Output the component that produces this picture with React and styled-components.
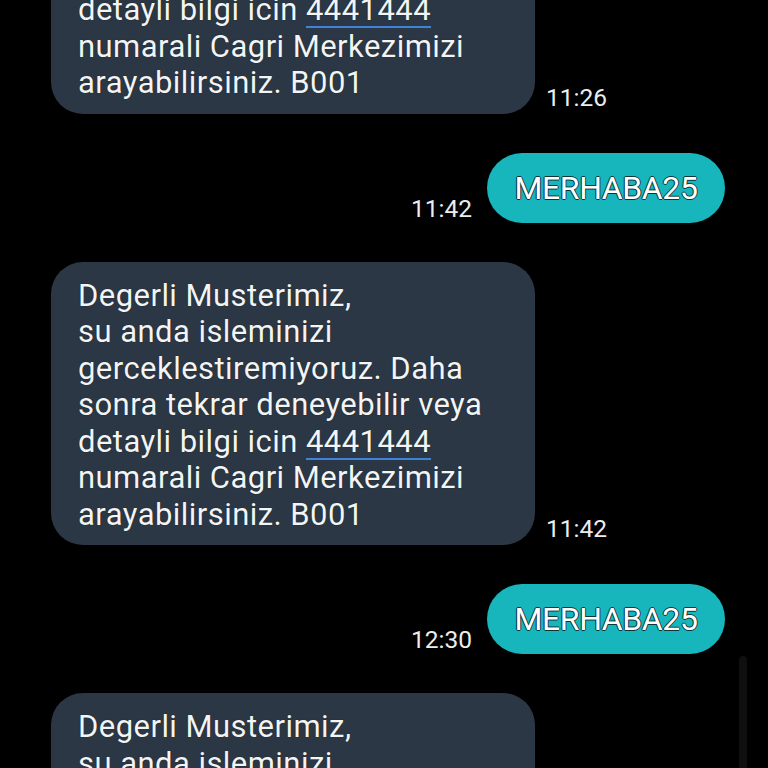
import React from "react";
import styled, { createGlobalStyle } from "styled-components";

const GlobalStyle = createGlobalStyle`
  html, body {
    margin: 0;
    padding: 0;
    background: #000;
  }
  body {
    font-family: Roboto, "Noto Sans", sans-serif;
  }
`;

const BODY_LINES = [
  "Degerli Musterimiz,",
  "su anda isleminizi",
  "gerceklestiremiyoruz. Daha",
  "sonra tekrar deneyebilir veya",
  ["detayli bilgi icin ", "4441444"],
  "numarali Cagri Merkezimizi",
  "arayabilirsiniz. B001",
];

const messages = [
  { id: 1, from: "them", time: "11:26" },
  { id: 2, from: "me", time: "11:42", text: "MERHABA25" },
  { id: 3, from: "them", time: "11:42" },
  { id: 4, from: "me", time: "12:30", text: "MERHABA25" },
  { id: 5, from: "them", time: "" },
];

const Screen = styled.div`
  position: relative;
  width: 768px;
  height: 768px;
  overflow: hidden;
  background: #000;
`;

const Thread = styled.div`
  display: flex;
  flex-direction: column;
  gap: 39px;
  margin-top: -170px;
`;

const Row = styled.div`
  display: flex;
  align-items: flex-end;
  justify-content: ${(p) => (p.$mine ? "flex-end" : "flex-start")};
  gap: ${(p) => (p.$mine ? "15px" : "11px")};
  padding: ${(p) => (p.$mine ? "0 43px 0 0" : "0 0 0 51px")};
`;

const InBubble = styled.div`
  box-sizing: border-box;
  width: 484px;
  padding: 16px 20px 12px 27px;
  background: #2b3744;
  border-radius: 32px;
  color: #f2f4f5;
  font-size: 31px;
  letter-spacing: 0.45px;
  line-height: 36.5px;
  text-shadow: 0 0 1px rgba(0, 0, 0, 0.7);
`;

const Line = styled.div`
  white-space: nowrap;
`;

const Phone = styled.span`
  text-decoration: underline;
  text-decoration-color: #3f82d8;
  text-decoration-thickness: 2px;
  text-underline-offset: 6px;
`;

const OutBubble = styled.div`
  box-sizing: border-box;
  width: 238px;
  height: 70px;
  display: flex;
  align-items: center;
  justify-content: center;
  background: #17b6bc;
  border-radius: 35px;
  color: #fff;
  font-size: 32px;
  letter-spacing: -0.4px;
  text-shadow:
    1px 0 0 #0c3537,
    -1px 0 0 #0c3537,
    0 1px 0 #0c3537,
    0 -1px 0 #0c3537;
`;

const Time = styled.span`
  color: #ebedee;
  font-size: 24.5px;
  line-height: 26px;
  margin-bottom: ${(p) => (p.$mine ? "1px" : "3px")};
`;

const ScrollBar = styled.div`
  position: absolute;
  left: 739px;
  top: 656px;
  width: 8px;
  height: 140px;
  border-radius: 4px;
  background: #0f0f0f;
`;

const IncomingText = () => (
  <>
    {BODY_LINES.map((l, i) =>
      Array.isArray(l) ? (
        <Line key={i}>
          {l[0]}
          <Phone>{l[1]}</Phone>
        </Line>
      ) : (
        <Line key={i}>{l}</Line>
      ),
    )}
  </>
);

export default function App() {
  return (
    <>
      <GlobalStyle />
      <Screen>
        <Thread>
          {messages.map((m) =>
            m.from === "me" ? (
              <Row key={m.id} $mine>
                <Time $mine>{m.time}</Time>
                <OutBubble>{m.text}</OutBubble>
              </Row>
            ) : (
              <Row key={m.id}>
                <InBubble>
                  <IncomingText />
                </InBubble>
                {m.time && <Time>{m.time}</Time>}
              </Row>
            ),
          )}
        </Thread>
        <ScrollBar />
      </Screen>
    </>
  );
}
